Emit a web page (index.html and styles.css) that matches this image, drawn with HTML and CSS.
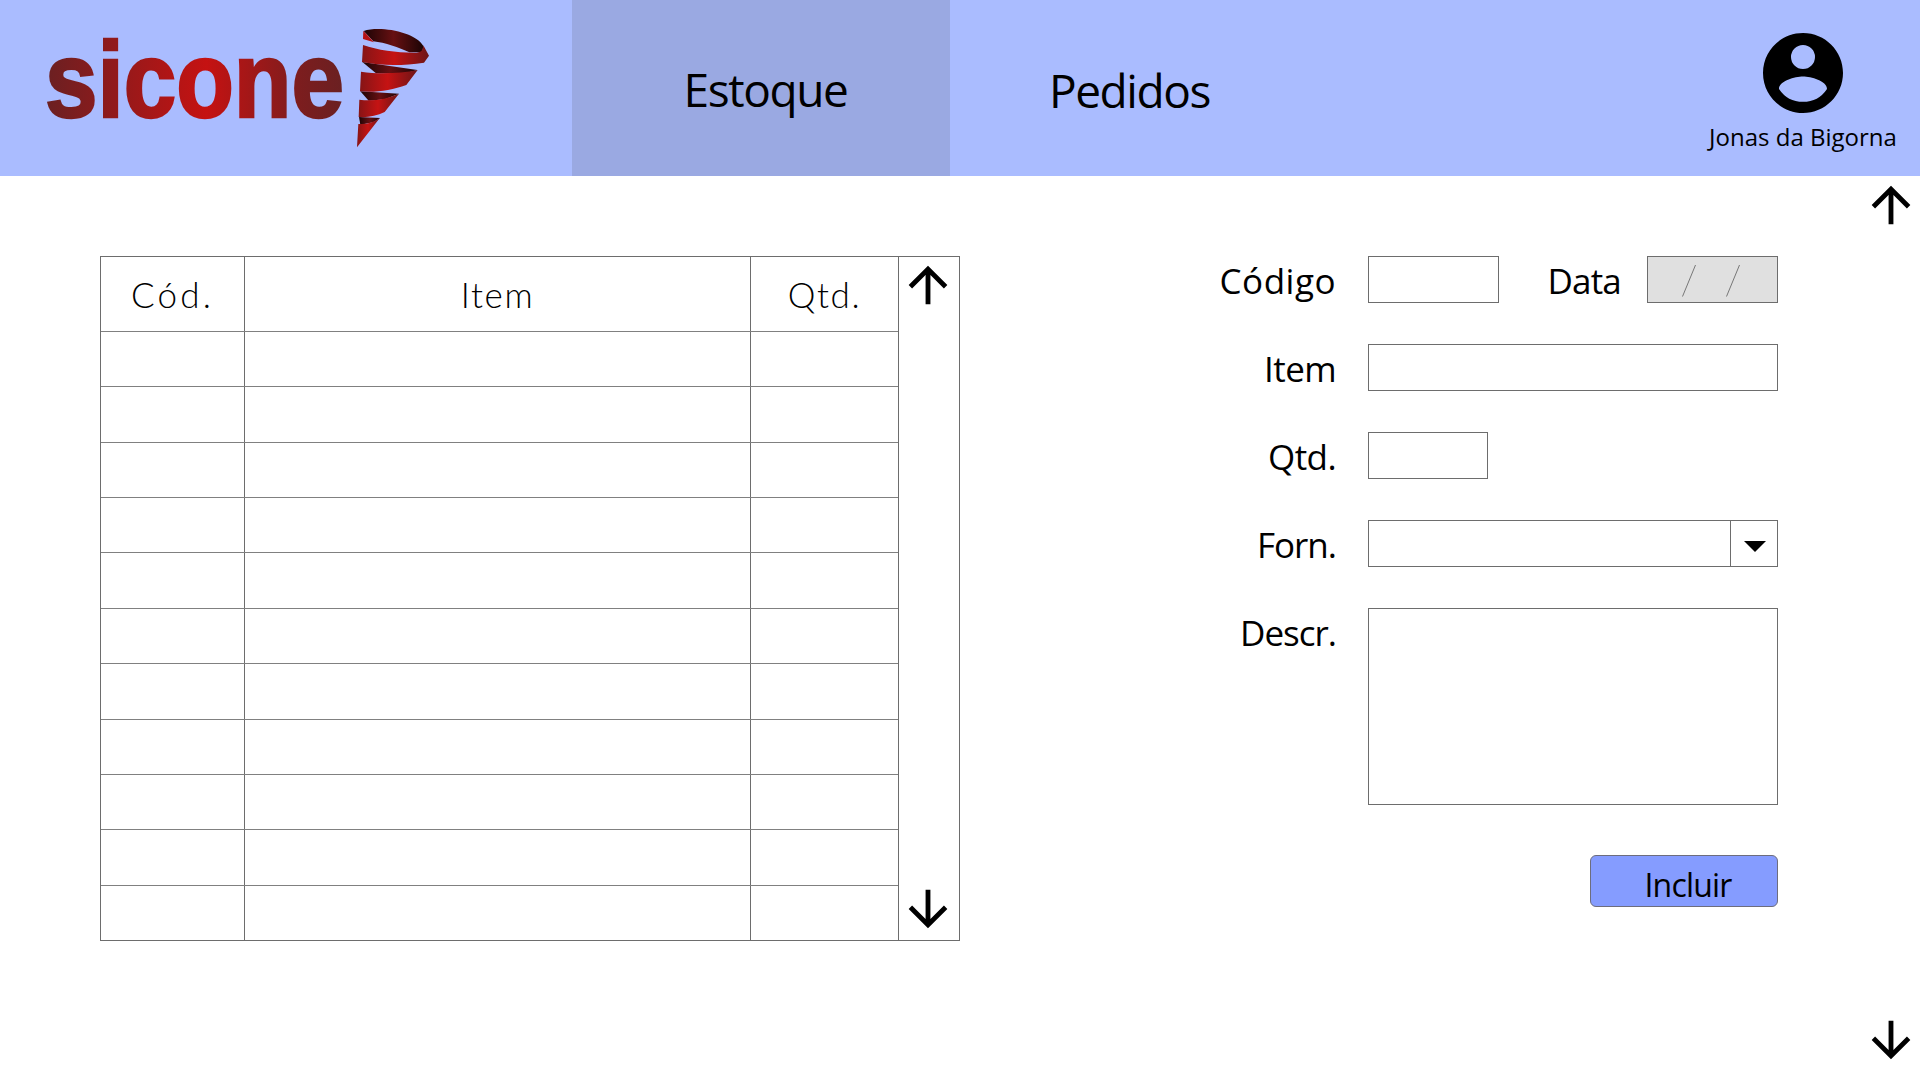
FILE: index.html
```html
<!DOCTYPE html>
<html lang="pt-BR">
<head>
<meta charset="utf-8">
<title>Sicone - Estoque</title>
<link rel="stylesheet" href="styles.css">
</head>
<body>
<svg width="0" height="0" class="defs" aria-hidden="true">
  <symbol id="arrow-up" viewBox="0 0 24 24"><path d="M4 12l1.41 1.41L11 7.83V20h2V7.83l5.58 5.59L20 12l-8-8-8 8z"/></symbol>
  <symbol id="arrow-down" viewBox="0 0 24 24"><path d="M20 12l-1.41-1.41L13 16.17V4h-2v12.17l-5.58-5.59L4 12l8 8 8-8z"/></symbol>
</svg>
<header class="topbar">
  <svg class="logo" viewBox="0 0 400 140" role="img" aria-label="Sicone">
    <defs>
      <linearGradient id="word" gradientUnits="userSpaceOnUse" x1="5" y1="0" x2="304" y2="0">
        <stop offset="0" stop-color="#6a2022"/><stop offset=".54" stop-color="#c51212"/><stop offset=".85" stop-color="#7c1d1e"/><stop offset="1" stop-color="#6a2022"/>
      </linearGradient>
      <linearGradient id="band"><stop offset="0" stop-color="#861416"/><stop offset=".48" stop-color="#c51313"/><stop offset="1" stop-color="#6c1517"/></linearGradient>
      <linearGradient id="fold"><stop offset="0" stop-color="#1c0405"/><stop offset=".5" stop-color="#671012"/><stop offset="1" stop-color="#1c0405"/></linearGradient>
    </defs>
    <text class="wordmark" x="5" y="97" textLength="299" lengthAdjust="spacingAndGlyphs" fill="url(#word)" stroke="url(#word)">sicone</text>
    <g transform="translate(190 0) scale(.33333)">
      <path fill="url(#fold)" d="M401 33C450 17 555 35 580 78L577 97 538 97C507 83 465 68 430 64Z"/>
      <path fill="#b51214" d="M400 32L432 67 399 57Z"/>
      <path fill="url(#fold)" d="M397 126L562 150 520 162 438 160Z"/>
      <path fill="url(#fold)" d="M391 214L507 221 465 238 416 242Z"/>
      <path fill="url(#fold)" d="M387 291L450 294 430 307 391 314Z"/>
      <path fill="url(#band)" d="M399 75C445 91 505 99 560 98Q580 97 580 76L597 107 582 128C520 137 455 138 396 126Z"/>
      <path fill="url(#band)" d="M393 155C450 164 510 160 563 150L529 195C485 211 435 219 390 214Z"/>
      <path fill="url(#band)" d="M388 239C430 245 470 237 507 221L464 276C440 288 413 293 386 291Z"/>
      <path fill="url(#band)" d="M385 312C410 314 432 307 450 293L381 382Z"/>
    </g>
  </svg>
  <nav class="tabs">
    <a class="tab active"><span>Estoque</span></a>
    <a class="tab"><span class="pedidos">Pedidos</span></a>
  </nav>
  <div class="user">
    <svg class="avatar" viewBox="2 2 20 20"><path fill-rule="evenodd" d="M12 2C6.48 2 2 6.48 2 12s4.48 10 10 10 10-4.48 10-10S17.52 2 12 2zm0 3a3 3 0 1 1 0 6 3 3 0 0 1 0-6zm0 14.2a7.2 7.2 0 0 1-6-3.22c.03-1.99 4-3.08 6-3.08s5.97 1.09 6 3.08a7.2 7.2 0 0 1-6 3.22z"/></svg>
    <span class="user-name">Jonas da Bigorna</span>
  </div>
</header>
<main class="page">
  <section class="stock">
    <div class="grid">
      <div class="row head"><span class="h-cod">Cód.</span><span>Item</span><span>Qtd.</span></div>
      <div class="row"><i></i><i></i><i></i></div>
      <div class="row"><i></i><i></i><i></i></div>
      <div class="row"><i></i><i></i><i></i></div>
      <div class="row"><i></i><i></i><i></i></div>
      <div class="row"><i></i><i></i><i></i></div>
      <div class="row"><i></i><i></i><i></i></div>
      <div class="row"><i></i><i></i><i></i></div>
      <div class="row"><i></i><i></i><i></i></div>
      <div class="row"><i></i><i></i><i></i></div>
      <div class="row"><i></i><i></i><i></i></div>
      <div class="row"><i></i><i></i><i></i></div>
    </div>
    <div class="scroll"><svg class="arrow"><use href="#arrow-up"/></svg><svg class="arrow"><use href="#arrow-down"/></svg></div>
  </section>
  <form class="form">
    <div class="line"><label class="l-codigo">Código</label><div class="box code"></div><label class="date-label">Data</label>
      <div class="box date"><svg viewBox="0 0 129 45"><path d="M34.5 39.5L47.5 8M78.5 39.5L91.5 8"/></svg></div></div>
    <div class="line"><label class="l-item">Item</label><div class="box wide"></div></div>
    <div class="line"><label class="l-item">Qtd.</label><div class="box qty"></div></div>
    <div class="line"><label class="l-forn">Forn.</label><div class="box wide select"><span class="drop"><svg viewBox="0 0 22 11"><path d="M0 0H22L11 11Z"/></svg></span></div></div>
    <div class="line"><label class="l-forn">Descr.</label><div class="box wide area"></div></div>
    <button class="submit" type="button">Incluir</button>
  </form>
  <aside class="page-scroll"><svg class="arrow"><use href="#arrow-up"/></svg><svg class="arrow"><use href="#arrow-down"/></svg></aside>
</main>
</body>
</html>
```
FILE: styles.css
```css
* { box-sizing: border-box; }
body { margin: 0; width: 1920px; height: 1080px; overflow: hidden; background: #fff; color: #000; font-family: "Open Sans", "Noto Sans", sans-serif; display: flex; flex-direction: column; }
.defs { position: absolute; }
.topbar { height: 176px; flex: none; background: #aabcff; display: flex; }
.logo { width: 400px; height: 140px; margin: 20px 132px 0 40px; flex: none; overflow: visible; }
.wordmark { font: bold 108px "Liberation Sans", sans-serif; stroke-width: 2.5px; }
.tabs { display: flex; }
.tab { width: 378px; height: 176px; display: flex; justify-content: center; padding-top: 56px; font-size: 46px; line-height: 66px; letter-spacing: -1.4px; }
.tab.active { background: #9aa9e2; padding-left: 9px; }
.tab .pedidos { margin-right: 19px; padding-top: 1px; }
.user { margin-left: auto; width: 234px; padding-top: 33px; display: flex; flex-direction: column; align-items: center; }
.avatar { width: 80px; height: 80px; }
.user-name { font-size: 24px; line-height: 32px; margin-top: 8px; white-space: nowrap; }
.page { flex: 1; display: flex; padding: 80px 0 0 100px; }
.stock { display: flex; width: 860px; height: 685px; border: 1px solid #6d6d6d; }
.grid { width: 798px; display: flex; flex-direction: column; border-right: 1px solid #6d6d6d; }
.row { flex: 1; display: grid; grid-template-columns: 143px 506px 148px; border-top: 1px solid #808080; }
.row > * + * { border-left: 1px solid #6d6d6d; }
.row.head { flex: 0 0 74px; border-top: 0; font-family: Lato, sans-serif; font-weight: 300; font-size: 35px; letter-spacing: 1.6px; line-height: 74px; text-align: center; }
.row.head .h-cod { letter-spacing: 3.2px; }
.scroll { flex: 1; display: flex; flex-direction: column; justify-content: space-between; align-items: center; padding: 0 5px 2px 0; }
.scroll .arrow:first-child { margin-top: -1px; }
.arrow { width: 58px; height: 58px; }
.form { width: 578px; margin-left: 240px; display: flex; flex-direction: column; gap: 41px; }
.line { display: flex; }
.line label { width: 136px; font-size: 35px; line-height: 47px; height: 47px; padding-top: 1px; text-align: right; }
.line .l-codigo { letter-spacing: 0.5px; }
.line .l-item { letter-spacing: -0.6px; }
.line .l-forn { letter-spacing: -1px; }
.box { height: 47px; border: 1px solid #6d6d6d; background: #fff; margin-left: 32px; flex: none; }
.code { width: 131px; }
.qty { width: 120px; }
.wide { width: 410px; }
.line .date-label { width: 122px; letter-spacing: -0.8px; }
.date { width: 131px; margin-left: 26px; background: #e0e0e0; }
.date svg { display: block; width: 129px; height: 45px; fill: none; stroke: #777; stroke-width: 1; }
.select { display: flex; justify-content: flex-end; }
.drop { width: 47px; border-left: 1px solid #6d6d6d; display: flex; align-items: center; justify-content: center; padding: 6px 0 0 2px; }
.drop svg { width: 22px; height: 11px; }
.area { height: 197px; }
.submit { align-self: flex-end; width: 188px; height: 52px; margin-top: 9px; padding: 6px 0 0 8px; border: 1px solid #6d6d7d; border-radius: 6px; background: #859cff; color: #000; font: 32px/46px "Open Sans", sans-serif; letter-spacing: -0.8px; }
.page-scroll { margin: -80px 0 0 auto; width: 58px; display: flex; flex-direction: column; justify-content: space-between; padding-bottom: 11px; }
```
